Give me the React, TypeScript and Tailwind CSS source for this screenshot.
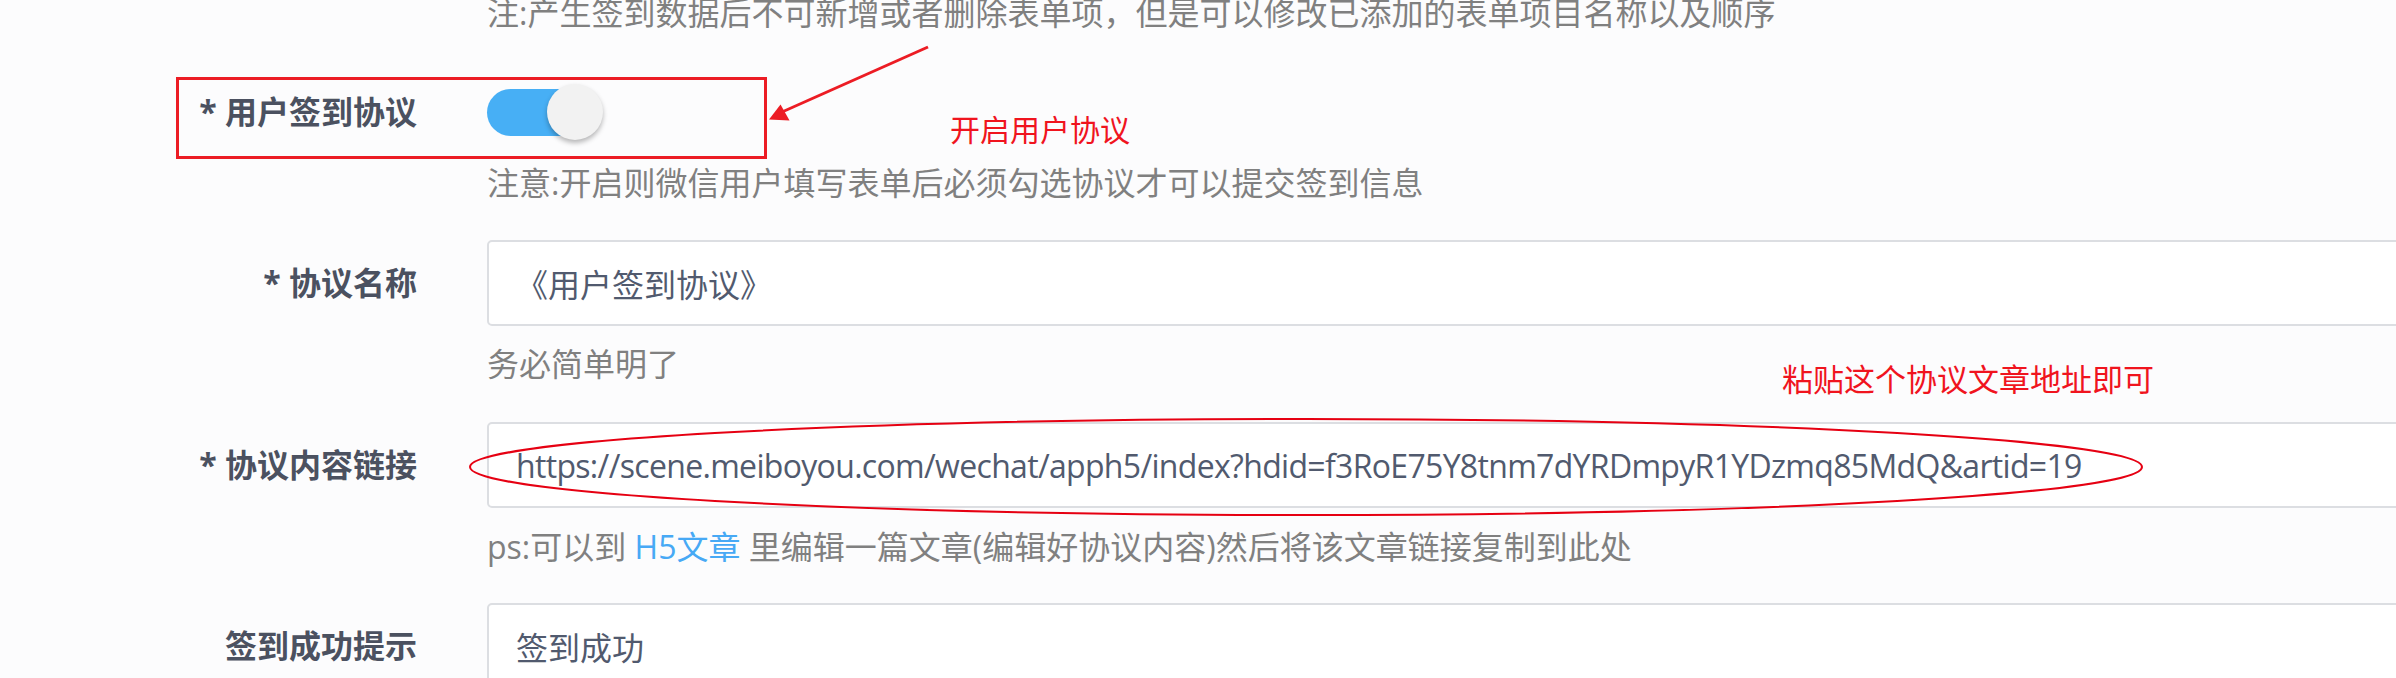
const URL_TEXT =
  'https://scene.meiboyou.com/wechat/apph5/index?hdid=f3RoE75Y8tnm7dYRDmpyR1YDzmq85MdQ&artid=19';

function Hint({ children, className = '' }: { children: React.ReactNode; className?: string }) {
  return (
    <div className={`ml-[487px] h-[48px] whitespace-nowrap text-[32px] leading-[48px] text-[#808080] ${className}`}>
      {children}
    </div>
  );
}

function Row({
  label,
  children,
  className = '',
}: {
  label: string;
  children: React.ReactNode;
  className?: string;
}) {
  return (
    <div className={`flex h-[86px] items-center ${className}`}>
      <div className="w-[417px] shrink-0 whitespace-nowrap text-right text-[32px] font-bold text-[#4b5160]">
        {label}
      </div>
      <div className="ml-[70px] flex items-center">{children}</div>
    </div>
  );
}

function TextField({ value, tight = false }: { value: string; tight?: boolean }) {
  return (
    <input
      readOnly
      value={value}
      className={`h-[86px] w-[2100px] rounded-[5px] border-2 border-[#dcdee2] bg-white px-[27px] text-[32px] text-[#515a6e] outline-none ${
        tight ? 'tracking-[-0.68px]' : ''
      }`}
    />
  );
}

function Toggle() {
  return (
    <div className="relative h-[56px] w-[116px]">
      <div className="mt-[5px] h-[47px] w-[100px] rounded-full bg-[#47aff5]" />
      <div className="absolute right-0 top-0 h-[56px] w-[56px] rounded-full bg-[#f2f2f2] shadow-[0_3px_5px_rgba(0,0,0,0.28)]" />
    </div>
  );
}

export default function App() {
  return (
    <div className="relative h-[678px] w-[2396px] overflow-hidden bg-[#fcfcfd] font-['Open_Sans','Noto_Sans_CJK_SC',sans-serif]">
      <div className="-mt-[11px] flex flex-col">
        <Hint>注:产生签到数据后不可新增或者删除表单项，但是可以修改已添加的表单项目名称以及顺序</Hint>

        <Row label="* 用户签到协议" className="mt-[32px]">
          <Toggle />
        </Row>
        <Hint className="mt-[4px]">注意:开启则微信用户填写表单后必须勾选协议才可以提交签到信息</Hint>

        <Row label="* 协议名称" className="mt-[33px]">
          <TextField value="《用户签到协议》" />
        </Row>
        <Hint className="mt-[14px]">务必简单明了</Hint>

        <Row label="* 协议内容链接" className="mt-[34px]">
          <TextField value={URL_TEXT} tight />
        </Row>
        <Hint className="mt-[15px]">
          ps:可以到 <span className="text-[#47a9f5]">H5文章</span> 里编辑一篇文章(编辑好协议内容)然后将该文章链接复制到此处
        </Hint>

        <Row label="签到成功提示" className="mt-[32px]">
          <TextField value="签到成功" />
        </Row>
      </div>

      {/* annotations drawn over the screenshot */}
      <div className="pointer-events-none absolute left-[176px] top-[77px] h-[82px] w-[591px] border-[3px] border-[#ec1c24]" />

      <svg className="pointer-events-none absolute left-0 top-0" width="2396" height="678">
        <line x1="928" y1="47" x2="782" y2="112" stroke="#ec1c24" strokeWidth="3" />
        <polygon points="769,119.5 780.5,104.5 789.5,120.5" fill="#ec1c24" />
        <ellipse cx="1306" cy="467" rx="836" ry="48" fill="none" stroke="#e60012" strokeWidth="2" />
      </svg>

      <div className="pointer-events-none absolute left-[950px] top-[115px] whitespace-nowrap text-[30px] leading-[30px] text-[#f0141e]">
        开启用户协议
      </div>
      <div className="pointer-events-none absolute left-[1782px] top-[364px] whitespace-nowrap text-[31px] leading-[31px] text-[#f0141e]">
        粘贴这个协议文章地址即可
      </div>
    </div>
  );
}
